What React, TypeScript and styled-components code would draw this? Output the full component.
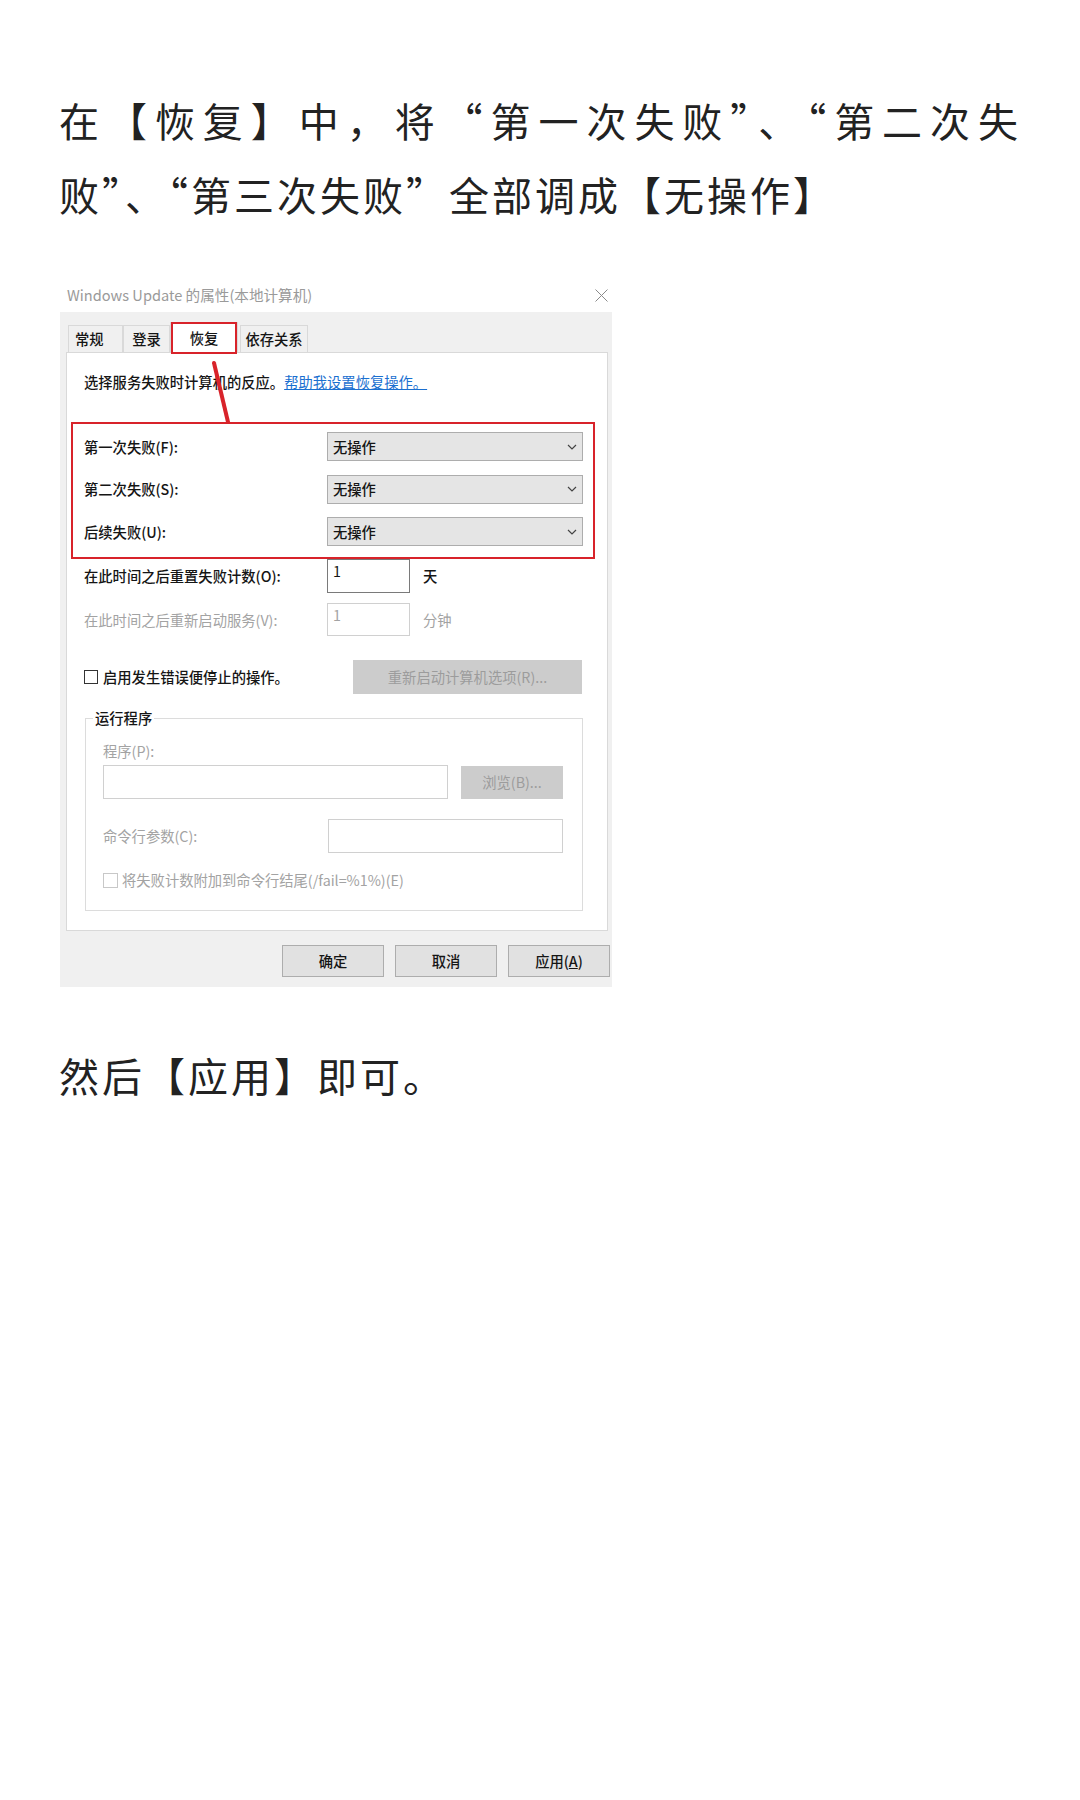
import React from "react";
import styled, { createGlobalStyle } from "styled-components";

const GlobalStyle = createGlobalStyle`
  html, body {
    margin: 0;
    padding: 0;
    background: #fff;
  }
  body {
    font-family: "Noto Sans CJK SC", "Noto Sans", sans-serif;
  }
`;

const Page = styled.main`
  width: 1080px;
  min-height: 1800px;
  box-sizing: border-box;
  padding: 83px 59px 0;
`;

const Paragraph = styled.p`
  margin: 0;
  font-size: 40px;
  line-height: 74px;
  letter-spacing: 3px;
  color: #222;
  text-align: justify;
`;

const Dialog = styled.figure`
  position: relative;
  margin: 47px 0 51px;
  width: 553px;
  height: 709px;
  background: #fff;
  font-size: 14.3px;
  line-height: 20px;
  color: #151515;
`;

const TitleBar = styled.div`
  height: 34px;
  box-sizing: border-box;
  padding: 0 4px 0 8px;
  display: flex;
  align-items: center;
  justify-content: space-between;
  color: #9a9a9a;
  font-size: 14.6px;
`;

const DialogBody = styled.div`
  margin-left: 1px;
  height: 675px;
  box-sizing: border-box;
  padding: 13px 2px 10px 6px;
  background: #f0f0f0;
  display: flex;
  flex-direction: column;
`;

const TabStrip = styled.div`
  height: 27px;
  padding-left: 2px;
  display: flex;
  align-items: flex-end;
  position: relative;
  z-index: 1;
`;

const Tab = styled.div<{ $w: number; $active?: boolean; $start?: boolean }>`
  position: relative;
  width: ${(p) => p.$w}px;
  height: ${(p) => (p.$active ? 31 : 27)}px;
  margin-bottom: ${(p) => (p.$active ? -1 : 0)}px;
  margin-right: ${(p) => (p.$active ? 2 : 0)}px;
  box-sizing: border-box;
  padding-left: ${(p) => (p.$start ? 6 : 0)}px;
  border: 1px solid #d9d9d9;
  border-bottom: none;
  background: ${(p) => (p.$active ? "#fff" : "#f0f0f0")};
  display: flex;
  align-items: center;
  justify-content: ${(p) => (p.$start ? "flex-start" : "center")};
  color: #151515;
  font-weight: 500;

  ${(p) =>
    p.$active &&
    `
    &::after {
      content: "";
      position: absolute;
      top: -1px;
      bottom: -1px;
      left: 0;
      right: 0;
      border: 2px solid #d8232a;
    }
  `}
`;

const Panel = styled.div`
  width: 542px;
  height: 579px;
  box-sizing: border-box;
  background: #fff;
  border: 1px solid #d9d9d9;
  display: flex;
  flex-direction: column;
`;

const Description = styled.div`
  margin: 19px 0 0 17px;
  color: #151515;
  font-weight: 500;
`;

const HelpLink = styled.a`
  color: #1a6fd0;
  text-decoration: underline;
  font-weight: 400;
`;

const RedFrame = styled.div`
  margin: 30px 0 0 4px;
  width: 524px;
  height: 137px;
  box-sizing: border-box;
  border: 2px solid #d8232a;
  padding: 8px 10px 0 11px;
  display: flex;
  flex-direction: column;
  gap: 13.5px;
`;

const SelectRow = styled.div`
  height: 29px;
  display: flex;
  align-items: center;
`;

const Label = styled.span<{ $w?: number; $muted?: boolean }>`
  width: ${(p) => (p.$w ? `${p.$w}px` : "auto")};
  flex-shrink: 0;
  color: ${(p) => (p.$muted ? "#a3a3a3" : "#151515")};
  font-weight: ${(p) => (p.$muted ? 400 : 500)};
`;

const Select = styled.div`
  width: 256px;
  height: 29px;
  box-sizing: border-box;
  border: 1px solid #adadad;
  background: #e5e5e5;
  padding: 0 5px 0 5px;
  display: flex;
  align-items: center;
  justify-content: space-between;
  color: #151515;
  font-weight: 500;
`;

const FieldRow = styled.div<{ $top: number; $h: number }>`
  margin-top: ${(p) => p.$top}px;
  height: ${(p) => p.$h}px;
  padding-left: 17px;
  display: flex;
  align-items: center;
`;

const TextBox = styled.div<{ $w: number; $h: number; $dark?: boolean; $muted?: boolean }>`
  width: ${(p) => p.$w}px;
  height: ${(p) => p.$h}px;
  box-sizing: border-box;
  flex-shrink: 0;
  border: 1px solid ${(p) => (p.$dark ? "#7a7a7a" : "#d0d0d0")};
  background: #fff;
  padding: 1px 5px;
  color: ${(p) => (p.$muted ? "#a3a3a3" : "#151515")};
`;

const Unit = styled.span<{ $muted?: boolean }>`
  margin-left: 13px;
  color: ${(p) => (p.$muted ? "#a3a3a3" : "#151515")};
  font-weight: ${(p) => (p.$muted ? 400 : 500)};
`;

const CheckRow = styled.div`
  margin-top: 24px;
  height: 34px;
  padding: 0 25px 0 17px;
  display: flex;
  align-items: center;
  justify-content: space-between;
`;

const CheckLabel = styled.label<{ $muted?: boolean }>`
  display: flex;
  align-items: center;
  gap: ${(p) => (p.$muted ? 4 : 5)}px;
  color: ${(p) => (p.$muted ? "#a3a3a3" : "#151515")};
  font-weight: ${(p) => (p.$muted ? 400 : 500)};
`;

const Box = styled.span<{ $muted?: boolean }>`
  width: ${(p) => (p.$muted ? 15 : 14)}px;
  height: ${(p) => (p.$muted ? 15 : 14)}px;
  box-sizing: border-box;
  border: 1px solid ${(p) => (p.$muted ? "#c8c8c8" : "#333")};
  background: #fff;
`;

const DisabledButton = styled.div<{ $w: number; $h: number; $gap?: number }>`
  width: ${(p) => p.$w}px;
  height: ${(p) => p.$h}px;
  margin-left: ${(p) => p.$gap ?? 0}px;
  flex-shrink: 0;
  background: #cccccc;
  color: #9c9c9c;
  display: flex;
  align-items: center;
  justify-content: center;
`;

const Group = styled.fieldset`
  margin: 14px 0 0 18px;
  width: 498px;
  box-sizing: border-box;
  border: 1px solid #dcdcdc;
  padding: 13px 0 20px 0;
  display: flex;
  flex-direction: column;
`;

const Legend = styled.legend`
  margin-left: 7px;
  padding: 0 2px;
  color: #151515;
  font-weight: 500;
`;

const GroupLine = styled.div<{ $top?: number }>`
  margin-top: ${(p) => p.$top ?? 0}px;
  padding-left: 17px;
  display: flex;
  align-items: center;
`;

const ButtonRow = styled.div`
  margin-top: 14px;
  display: flex;
  justify-content: flex-end;
  gap: 11px;
`;

const Button = styled.div`
  width: 102px;
  height: 32px;
  box-sizing: border-box;
  border: 1px solid #adadad;
  background: #e1e1e1;
  color: #151515;
  font-weight: 500;
  display: flex;
  align-items: center;
  justify-content: center;

  u {
    text-decoration: underline;
  }
`;

const Annotation = styled.svg`
  position: absolute;
  left: 150px;
  top: 80px;
  overflow: visible;
`;

const Chevron = () => (
  <svg width="10" height="6" viewBox="0 0 10 6">
    <path d="M1 1 L5 5 L9 1" fill="none" stroke="#444" strokeWidth="1.2" />
  </svg>
);

const CloseIcon = () => (
  <svg width="13" height="13" viewBox="0 0 13 13">
    <path d="M0.5 0.5 L12.5 12.5 M12.5 0.5 L0.5 12.5" stroke="#8a8a8a" strokeWidth="1" />
  </svg>
);

const failures = ["第一次失败(F):", "第二次失败(S):", "后续失败(U):"];

const App: React.FC = () => {
  return (
    <Page>
      <GlobalStyle />
      <Paragraph>
        在【恢复】中，将“第一次失败”、“第二次失败”、“第三次失败”全部调成【无操作】
      </Paragraph>

      <Dialog>
        <TitleBar>
          <span>Windows Update 的属性(本地计算机)</span>
          <CloseIcon />
        </TitleBar>
        <DialogBody>
          <TabStrip>
            <Tab $w={55} $start>
              常规
            </Tab>
            <Tab $w={47}>登录</Tab>
            <Tab $w={68} $active>
              恢复
            </Tab>
            <Tab $w={68}>依存关系</Tab>
          </TabStrip>
          <Panel>
            <Description>
              选择服务失败时计算机的反应。<HelpLink>帮助我设置恢复操作。</HelpLink>
            </Description>

            <RedFrame>
              {failures.map((f) => (
                <SelectRow key={f}>
                  <Label $w={243}>{f}</Label>
                  <Select>
                    <span>无操作</span>
                    <Chevron />
                  </Select>
                </SelectRow>
              ))}
            </RedFrame>

            <FieldRow $top={0} $h={34}>
              <Label $w={243}>在此时间之后重置失败计数(O):</Label>
              <TextBox $w={83} $h={34} $dark>
                1
              </TextBox>
              <Unit>天</Unit>
            </FieldRow>
            <FieldRow $top={10} $h={33}>
              <Label $w={243} $muted>
                在此时间之后重新启动服务(V):
              </Label>
              <TextBox $w={83} $h={33} $muted>
                1
              </TextBox>
              <Unit $muted>分钟</Unit>
            </FieldRow>

            <CheckRow>
              <CheckLabel>
                <Box />
                启用发生错误便停止的操作。
              </CheckLabel>
              <DisabledButton $w={229} $h={34}>
                重新启动计算机选项(R)...
              </DisabledButton>
            </CheckRow>

            <Group>
              <Legend>运行程序</Legend>
              <GroupLine>
                <Label $muted>程序(P):</Label>
              </GroupLine>
              <GroupLine $top={4}>
                <TextBox $w={345} $h={34} />
                <DisabledButton $w={102} $h={33} $gap={13}>
                  浏览(B)...
                </DisabledButton>
              </GroupLine>
              <GroupLine $top={20}>
                <Label $w={225} $muted>
                  命令行参数(C):
                </Label>
                <TextBox $w={235} $h={34} />
              </GroupLine>
              <GroupLine $top={17}>
                <CheckLabel $muted>
                  <Box $muted />
                  将失败计数附加到命令行结尾(/fail=%1%)(E)
                </CheckLabel>
              </GroupLine>
            </Group>
          </Panel>

          <ButtonRow>
            <Button>确定</Button>
            <Button>取消</Button>
            <Button>
              应用(<u>A</u>)
            </Button>
          </ButtonRow>
        </DialogBody>

        <Annotation width="25" height="70" viewBox="0 0 25 70">
          <line x1="5" y1="5" x2="19" y2="64" stroke="#d8232a" strokeWidth="4" strokeLinecap="round" />
        </Annotation>
      </Dialog>

      <Paragraph>然后【应用】即可。</Paragraph>
    </Page>
  );
};

export default App;
